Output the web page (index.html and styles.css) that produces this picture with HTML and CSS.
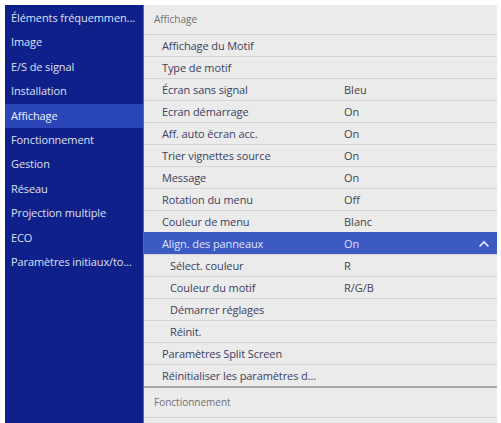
FILE: index.html
```html
<!DOCTYPE html>
<html lang="fr">
<head>
<meta charset="utf-8">
<title>Menu</title>
<link rel="stylesheet" href="styles.css">
</head>
<body>
<div class="screen">
  <nav class="side">
    <div class="side-item">Éléments fréquemmen...</div>
    <div class="side-item">Image</div>
    <div class="side-item">E/S de signal</div>
    <div class="side-item">Installation</div>
    <div class="side-item active">Affichage</div>
    <div class="side-item">Fonctionnement</div>
    <div class="side-item">Gestion</div>
    <div class="side-item">Réseau</div>
    <div class="side-item">Projection multiple</div>
    <div class="side-item">ECO</div>
    <div class="side-item">Paramètres initiaux/to...</div>
  </nav>
  <main class="panel">
    <div class="section">Affichage</div>
    <div class="row"><span class="label">Affichage du Motif</span><span class="value"></span></div>
    <div class="row"><span class="label">Type de motif</span><span class="value"></span></div>
    <div class="row"><span class="label">Écran sans signal</span><span class="value">Bleu</span></div>
    <div class="row"><span class="label">Ecran démarrage</span><span class="value">On</span></div>
    <div class="row"><span class="label">Aff. auto écran acc.</span><span class="value">On</span></div>
    <div class="row"><span class="label">Trier vignettes source</span><span class="value">On</span></div>
    <div class="row"><span class="label">Message</span><span class="value">On</span></div>
    <div class="row"><span class="label">Rotation du menu</span><span class="value">Off</span></div>
    <div class="row"><span class="label">Couleur de menu</span><span class="value">Blanc</span></div>
    <div class="row selected"><span class="label">Align. des panneaux</span><span class="value">On</span>
      <svg class="chev" viewBox="0 0 12 8" width="12" height="8"><path d="M1.5 6.5 L6 2 L10.5 6.5" fill="none" stroke="#e8ecff" stroke-width="1.6"/></svg>
    </div>
    <div class="row sub"><span class="label">Sélect. couleur</span><span class="value">R</span></div>
    <div class="row sub"><span class="label">Couleur du motif</span><span class="value">R/G/B</span></div>
    <div class="row sub"><span class="label">Démarrer réglages</span><span class="value"></span></div>
    <div class="row sub"><span class="label">Réinit.</span><span class="value"></span></div>
    <div class="row"><span class="label">Paramètres Split Screen</span><span class="value"></span></div>
    <div class="row last"><span class="label">Réinitialiser les paramètres d...</span><span class="value"></span></div>
    <div class="section">Fonctionnement</div>
    <div class="row"><span class="label">Démarrage direct</span><span class="value">Off</span></div>
  </main>
</div>
</body>
</html>
```
FILE: styles.css
```css
html, body {
  margin: 0;
  padding: 0;
  background: #ffffff;
}
body {
  width: 501px;
  height: 423px;
  overflow: hidden;
  font-family: "Open Sans", "Noto Sans", "DejaVu Sans", sans-serif;
  font-size: 11px;
}
.screen {
  display: flex;
  margin: 5px 4px 0 5px;
  height: 418px;
  overflow: hidden;
}
.side {
  width: 138px;
  flex: none;
  background: #10208a;
  padding-top: 1px;
  border-right: 1px solid #5a66a8;
}
.side-item {
  height: 24.4px;
  line-height: 24.4px;
  padding-left: 6px;
  color: #dde1f3;
  white-space: nowrap;
  overflow: hidden;
  letter-spacing: -0.1px;
}
.side-item.active {
  background: #2a45b5;
  color: #eef1ff;
}
.panel {
  flex: 1;
  background: #ebebeb;
  display: flex;
  flex-direction: column;
  overflow: hidden;
}
.section {
  height: 29px;
  line-height: 28px;
  padding-left: 10px;
  color: #707070;
  font-size: 10px;
  box-sizing: border-box;
  flex: none;
}
.row {
  flex: none;
  height: 22px;
  box-sizing: border-box;
  border-top: 1px solid #d6d6d6;
  display: grid;
  grid-template-columns: 200px 1fr 19px;
  align-items: center;
  color: #3c4060;
  white-space: nowrap;
}
.row .label {
  padding-left: 18px;
  letter-spacing: -0.1px;
}
.row.sub .label {
  padding-left: 26px;
}
.row .value {
  color: #454545;
}
.row.last {
  border-bottom: 2px solid #a8a8a8;
  height: 24px;
}
.row.selected {
  background: #3c59c4;
  border-top-color: #3c59c4;
  color: #dfe5ff;
}
.row.selected .value {
  color: #dfe5ff;
}
.chev {
  display: block;
}
```
